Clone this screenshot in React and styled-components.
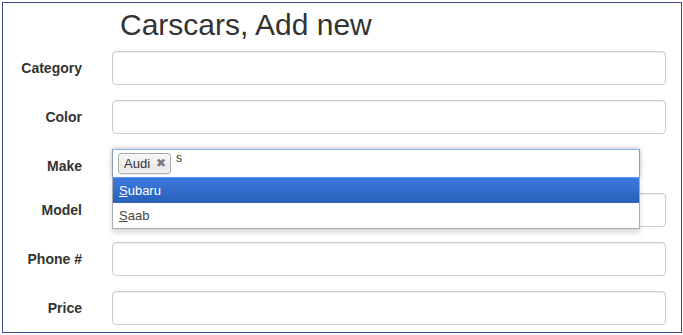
import styled, { createGlobalStyle } from "styled-components";

const GlobalStyle = createGlobalStyle`
  html, body {
    margin: 0;
    background: #fff;
  }
  body {
    font-family: "Liberation Sans", Arial, sans-serif;
    color: #333;
  }
`;

const Frame = styled.div`
  box-sizing: border-box;
  margin: 2px 0 0 2px;
  width: 680px;
  height: 331px;
  border: 1px solid #414c9c;
  background: #fff;
`;

const Title = styled.h3`
  margin: 5px 0 10px 117px;
  font-size: 30px;
  line-height: 33px;
  font-weight: 400;
  color: #333;
`;

const Form = styled.form`
  display: flex;
  flex-direction: column;
  gap: 15px;
`;

const Row = styled.div`
  display: flex;
  align-items: flex-start;
  gap: 30px;
`;

const Label = styled.label`
  width: 79px;
  padding-top: 7px;
  text-align: right;
  font-size: 14px;
  line-height: 20px;
  font-weight: 700;
  color: #333;
`;

const Input = styled.input`
  box-sizing: border-box;
  width: 554px;
  height: 34px;
  margin: 0;
  padding: 6px 12px;
  border: 1px solid #ccc;
  border-radius: 4px;
  background: #fff;
  box-shadow: inset 0 1px 1px rgba(0, 0, 0, 0.075);
  font: inherit;
  font-size: 14px;
  outline: none;
`;

const Chosen = styled.div`
  position: relative;
  width: 528px;
  font-size: 13px;
  z-index: 2;
`;

const Choices = styled.div`
  box-sizing: border-box;
  height: 29px;
  display: flex;
  align-items: flex-start;
  padding: 0 5px;
  border: 1px solid #5897fb;
  border-top-color: #8fb4ec;
  border-left-color: #8c9cc0;
  border-right-color: #8c9cc0;
  background: #fff;
  box-shadow: 0 0 5px rgba(0, 0, 0, 0.3);
`;

const Tag = styled.span`
  position: relative;
  box-sizing: border-box;
  margin: 3px 5px 3px 0;
  padding: 3px 20px 3px 5px;
  line-height: 13px;
  border: 1px solid #aaa;
  border-radius: 3px;
  background: linear-gradient(#f4f4f4 20%, #f0f0f0 50%, #e8e8e8 52%, #eee 100%);
  box-shadow: 0 0 2px #fff inset, 0 1px 0 rgba(0, 0, 0, 0.05);
  color: #333;
  font-size: 13px;
`;

const Close = styled.span`
  position: absolute;
  top: 3px;
  right: 4px;
  font-size: 12px;
  line-height: 13px;
  color: #7a7a7a;
`;

const Search = styled.span`
  margin-top: 2px;
  font-size: 12px;
  line-height: 12px;
  color: #333;
`;

const Drop = styled.ul`
  position: absolute;
  top: 100%;
  left: 0;
  right: 0;
  margin: 0;
  padding: 0;
  list-style: none;
  background: #fff;
  border: 1px solid #aaa;
  border-top: 0;
  box-shadow: 0 4px 5px rgba(0, 0, 0, 0.15);
`;

const Option = styled.li`
  padding: 5px 6px;
  line-height: 15px;
  color: ${(p) => (p.$active ? "#fff" : "#444")};
  background: ${(p) =>
    p.$active ? "linear-gradient(#3875d7 20%, #2a62bc 90%)" : "#fff"};

  em {
    font-style: normal;
    text-decoration: underline;
  }
`;

const fields = ["Category", "Color"];
const after = ["Model", "Phone #", "Price"];

export default function App() {
  return (
    <>
      <GlobalStyle />
      <Frame>
        <Title>Carscars, Add new</Title>
        <Form>
          {fields.map((f) => (
            <Row key={f}>
              <Label>{f}</Label>
              <Input type="text" />
            </Row>
          ))}
          <Row>
            <Label>Make</Label>
            <Chosen>
              <Choices>
                <Tag>
                  Audi
                  <Close>✖</Close>
                </Tag>
                <Search>s</Search>
              </Choices>
              <Drop>
                <Option $active>
                  <em>S</em>ubaru
                </Option>
                <Option>
                  <em>S</em>aab
                </Option>
              </Drop>
            </Chosen>
          </Row>
          {after.map((f) => (
            <Row key={f}>
              <Label>{f}</Label>
              <Input type="text" />
            </Row>
          ))}
        </Form>
      </Frame>
    </>
  );
}
